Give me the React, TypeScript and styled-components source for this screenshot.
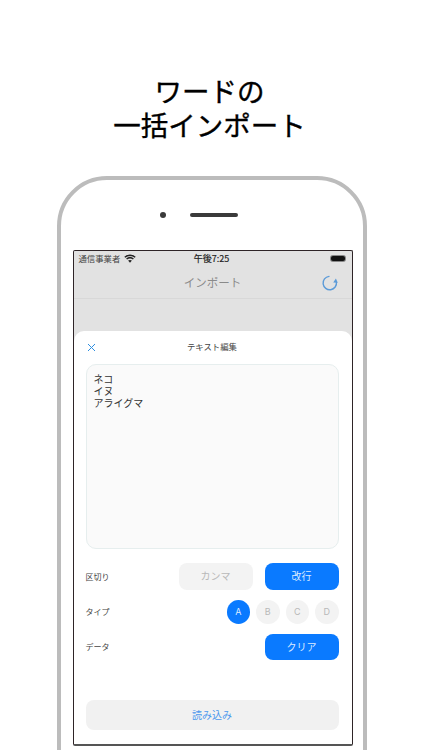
import styled, { createGlobalStyle } from 'styled-components'

const GlobalStyle = createGlobalStyle`
  html, body {
    margin: 0;
    padding: 0;
    background: #fff;
    font-family: "Noto Sans CJK JP", "Noto Sans", sans-serif;
  }
`

const Page = styled.div`
  width: 422px;
  height: 750px;
  overflow: hidden;
  padding-top: 73px;
  box-sizing: border-box;
  display: flex;
  flex-direction: column;
  align-items: center;
`

const Headline = styled.h1`
  margin: 0 3px 35px 0;
  font-size: 27.5px;
  line-height: 34px;
  font-weight: 400;
  -webkit-text-stroke: 0.35px #000;
  color: #000;
  text-align: center;
`

const Phone = styled.div`
  flex: none;
  width: 310px;
  height: 620px;
  box-sizing: border-box;
  margin-left: 2px;
  border: 4px solid #bcbcbc;
  border-radius: 50px 50px 0 0;
  display: flex;
  flex-direction: column;
  align-items: center;
`

const Sensors = styled.div`
  height: 70px;
  display: flex;
  align-items: center;
  justify-content: center;
  gap: 24px;
  box-sizing: border-box;
  margin-right: 27px;
`

const Camera = styled.div`
  width: 6px;
  height: 6px;
  border-radius: 50%;
  background: #3a3a3a;
`

const Speaker = styled.div`
  width: 48px;
  height: 4px;
  border-radius: 2px;
  background: #3a3a3a;
`

const Screen = styled.div`
  width: 280px;
  height: 496px;
  box-sizing: border-box;
  margin-left: 1px;
  border: 1px solid #2e2427;
  border-bottom-width: 2px;
  border-bottom-color: #555;
  border-radius: 2px;
  background: #e2e2e2;
  display: flex;
  flex-direction: column;
  overflow: hidden;
`

const StatusBar = styled.div`
  height: 14px;
  padding: 0 7px 0 5px;
  display: grid;
  grid-template-columns: 1fr auto 1fr;
  align-items: center;
  font-size: 8.4px;
  color: #444;
`

const Carrier = styled.div`
  display: flex;
  align-items: center;
  gap: 4px;
  white-space: nowrap;
`

const Time = styled.div`
  font-size: 9px;
  color: #222;
  -webkit-text-stroke: 0.2px #222;
`

const Battery = styled.div`
  justify-self: end;
  width: 14px;
  height: 5px;
  border-radius: 2px;
  background: #111;
  box-shadow: 0 0 0 1px #888;
`

const NavBar = styled.div`
  height: 33px;
  border-bottom: 1px solid #d8d8d8;
  display: flex;
  align-items: center;
  justify-content: center;
  position: relative;
  font-size: 11.5px;
  color: #8a8a8a;
`

const ReloadButton = styled.div`
  position: absolute;
  right: 13px;
  top: 9px;
  display: flex;
`

const Sheet = styled.div`
  flex: 1;
  margin-top: 32px;
  background: #fff;
  border-radius: 10px 10px 0 0;
  padding: 0 13px 14px 12px;
  display: flex;
  flex-direction: column;
`

const SheetHeader = styled.div`
  height: 33px;
  box-sizing: border-box;
  padding-bottom: 3px;
  flex: none;
  display: flex;
  align-items: center;
  justify-content: center;
  position: relative;
  font-size: 8.4px;
  color: #444;
`

const CloseButton = styled.div`
  position: absolute;
  left: 1px;
  top: 12px;
  display: flex;
`

const TextBox = styled.div`
  height: 185px;
  box-sizing: border-box;
  flex: none;
  padding: 8px 7px;
  background: #fafafa;
  border: 1px solid #e6eeee;
  border-radius: 10px;
  font-size: 10px;
  line-height: 12px;
  color: #333;
`

const Options = styled.div`
  margin-top: 14px;
  display: flex;
  flex-direction: column;
  gap: 10px;
`

const Row = styled.div`
  display: flex;
  align-items: center;
  justify-content: space-between;
`

const RowLabel = styled.span`
  font-size: 8px;
  color: #444;
`

const ButtonGroup = styled.div`
  display: flex;
  gap: 12px;
`

const Pill = styled.div<{ $active?: boolean }>`
  width: 74px;
  height: 26.5px;
  box-sizing: border-box;
  padding-bottom: 1px;
  border-radius: 8px;
  display: flex;
  align-items: center;
  justify-content: center;
  font-size: 10px;
  background: ${({ $active }) => ($active ? '#0a7aff' : '#f3f3f3')};
  color: ${({ $active }) => ($active ? '#dcebff' : '#b8b8b8')};
`

const TypeGroup = styled.div`
  display: flex;
  gap: 6px;
`

const TypeDot = styled.div<{ $active?: boolean }>`
  width: 23.5px;
  height: 24px;
  border-radius: 50%;
  display: flex;
  align-items: center;
  justify-content: center;
  font-family: "Inter", "Liberation Sans", sans-serif;
  font-size: 9px;
  background: ${({ $active }) => ($active ? '#0a7aff' : '#f3f3f3')};
  color: ${({ $active }) => ($active ? '#dcebff' : '#b8b8b8')};
`

const ImportButton = styled.div`
  margin-top: auto;
  height: 30px;
  box-sizing: border-box;
  padding-bottom: 1px;
  flex: none;
  border-radius: 8px;
  background: #f1f1f1;
  display: flex;
  align-items: center;
  justify-content: center;
  font-size: 10px;
  color: #4a97ee;
`

const WifiIcon = () => (
  <svg width="12" height="9" viewBox="0 0 12 9" fill="none" stroke="#222" strokeWidth="1.5">
    <path d="M0.8 3.2C3.8 0.6 8.2 0.6 11.2 3.2" />
    <path d="M2.6 5C4.6 3.4 7.4 3.4 9.4 5" />
    <path d="M6 8.8L4.1 6.6C5.2 5.8 6.8 5.8 7.9 6.6Z" fill="#222" stroke="none" />
  </svg>
)

const ReloadIcon = () => (
  <svg width="18" height="18" viewBox="0 0 18 18" fill="none">
    <path d="M8 2.4A6.7 6.7 0 1 0 15.4 8" stroke="#5c9bd8" strokeWidth="1.4" strokeLinecap="round" />
    <path d="M12.2 8.6L16.8 8.8L14.9 4.4Z" fill="#5c9bd8" />
  </svg>
)

const CloseIcon = () => (
  <svg width="9" height="9" viewBox="0 0 9 9" fill="none" stroke="#2f8fe0" strokeWidth="1">
    <path d="M1 1L8 8M8 1L1 8" />
  </svg>
)

const TYPES = ['A', 'B', 'C', 'D']

export default function App() {
  return (
    <Page>
      <GlobalStyle />
      <Headline>
        ワードの
        <br />
        一括インポート
      </Headline>
      <Phone>
        <Sensors>
          <Camera />
          <Speaker />
        </Sensors>
        <Screen>
          <StatusBar>
            <Carrier>
              通信事業者 <WifiIcon />
            </Carrier>
            <Time>午後7:25</Time>
            <Battery />
          </StatusBar>
          <NavBar>
            インポート
            <ReloadButton>
              <ReloadIcon />
            </ReloadButton>
          </NavBar>
          <Sheet>
            <SheetHeader>
              <CloseButton>
                <CloseIcon />
              </CloseButton>
              テキスト編集
            </SheetHeader>
            <TextBox>
              ネコ
              <br />
              イヌ
              <br />
              アライグマ
            </TextBox>
            <Options>
              <Row>
                <RowLabel>区切り</RowLabel>
                <ButtonGroup>
                  <Pill>カンマ</Pill>
                  <Pill $active>改行</Pill>
                </ButtonGroup>
              </Row>
              <Row>
                <RowLabel>タイプ</RowLabel>
                <TypeGroup>
                  {TYPES.map((type) => (
                    <TypeDot key={type} $active={type === 'A'}>
                      {type}
                    </TypeDot>
                  ))}
                </TypeGroup>
              </Row>
              <Row>
                <RowLabel>データ</RowLabel>
                <Pill $active>クリア</Pill>
              </Row>
            </Options>
            <ImportButton>読み込み</ImportButton>
          </Sheet>
        </Screen>
      </Phone>
    </Page>
  )
}
